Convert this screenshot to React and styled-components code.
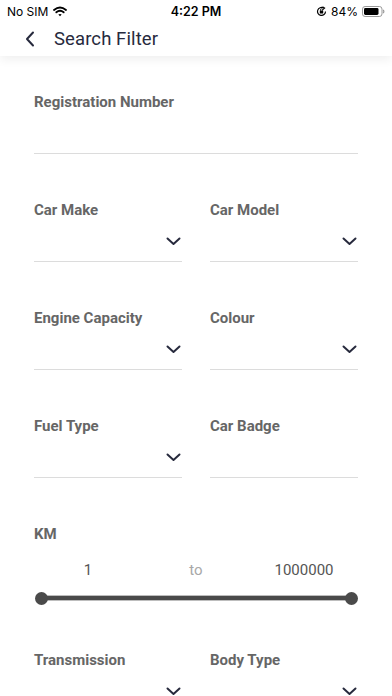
import styled, { createGlobalStyle } from "styled-components";

const NAVY = "#272a3d";
const LABEL_GREY = "#666666";
const LINE_GREY = "#dcdcdc";

const GlobalStyle = createGlobalStyle`
  html, body {
    margin: 0;
    padding: 0;
    background: #ffffff;
  }
  body {
    font-family: Roboto, "Liberation Sans", sans-serif;
  }
`;

const Screen = styled.div`
  width: 392px;
  height: 696px;
  overflow: hidden;
  background: #ffffff;
`;

const TopBar = styled.div`
  position: relative;
  z-index: 1;
  background: #ffffff;
  box-shadow: 0 3px 10px rgba(0, 0, 0, 0.07);
`;

const StatusBar = styled.div`
  height: 22px;
  display: grid;
  grid-template-columns: 1fr auto 1fr;
  align-items: center;
  padding: 0 7px;
  font-family: Inter, "Liberation Sans", sans-serif;
  font-size: 12px;
  color: #000;
`;

const StatusLeft = styled.div`
  display: flex;
  align-items: center;
  gap: 5px;
`;

const StatusTime = styled.div`
  font-weight: 600;
  font-size: 12.5px;
`;

const StatusRight = styled.div`
  display: flex;
  align-items: center;
  justify-content: flex-end;
  gap: 4px;
`;

const NavRow = styled.div`
  height: 34px;
  display: flex;
  align-items: center;
  padding-left: 25px;
  gap: 19px;
`;

const Title = styled.div`
  font-size: 18.5px;
  color: ${NAVY};
  letter-spacing: 0.1px;
`;

const Form = styled.div`
  padding: 36px 34px 0;
  display: flex;
  flex-direction: column;
  gap: 46px;
`;

const Row = styled.div`
  display: grid;
  grid-template-columns: 1fr 1fr;
  column-gap: 28px;
`;

const Field = styled.div`
  display: flex;
  flex-direction: column;
`;

const Label = styled.div`
  font-size: 15px;
  line-height: 20px;
  font-weight: 700;
  color: ${LABEL_GREY};
`;

const InputBox = styled.div`
  height: 42px;
  border-bottom: 1px solid ${LINE_GREY};
  display: flex;
  align-items: center;
  justify-content: flex-end;
  padding-right: 1px;
  padding-top: 1px;
  box-sizing: border-box;
`;

const RangeValues = styled.div`
  margin-top: 16px;
  display: grid;
  grid-template-columns: repeat(3, 1fr);
  text-align: center;
  font-size: 15px;
  line-height: 20px;
`;

const RangeValue = styled.span`
  color: ${(p) => (p.$muted ? "#a8a8a8" : "#555555")};
`;

const Slider = styled.div`
  position: relative;
  margin: 12px 7px 0;
  height: 12px;
  display: flex;
  align-items: center;
`;

const Track = styled.div`
  flex: 1;
  height: 4px;
  background: #4a4a4a;
  box-shadow: 0 0 0 1px #bdbdbd;
`;

const Thumb = styled.div`
  position: absolute;
  top: -0.5px;
  width: 13px;
  height: 13px;
  border-radius: 50%;
  background: #4a4a4a;
  ${(p) => (p.$end ? "right: -6.5px;" : "left: -6.5px;")}
`;

const Chevron = () => (
  <svg width="15" height="9" viewBox="0 0 15 9">
    <path d="M1.5 1.5 L7.5 7 L13.5 1.5" fill="none" stroke={NAVY} strokeWidth="2" strokeLinecap="round" strokeLinejoin="round" />
  </svg>
);

const BackIcon = () => (
  <svg width="10" height="16" viewBox="0 0 10 16">
    <path d="M8 1.5 L2 8 L8 14.5" fill="none" stroke={NAVY} strokeWidth="2" strokeLinecap="round" strokeLinejoin="round" />
  </svg>
);

const Wifi = () => (
  <svg width="14" height="11" viewBox="0 0 14 11">
    <path d="M1 4 Q7 -1 13 4" fill="none" stroke="#000" strokeWidth="1.8" strokeLinecap="round" />
    <path d="M3.3 6.3 Q7 3.2 10.7 6.3" fill="none" stroke="#000" strokeWidth="1.8" strokeLinecap="round" />
    <path d="M5.3 8.6 L7 10.3 L8.7 8.6 Q7 7.2 5.3 8.6 Z" fill="#000" />
  </svg>
);

const RotationLock = () => (
  <svg width="11" height="11" viewBox="0 0 11 11">
    <path d="M9.5 5.5 A4 4 0 1 1 7.5 2" fill="none" stroke="#000" strokeWidth="1.2" />
    <path d="M6.5 0.8 L8.6 2 L6.8 3.6" fill="none" stroke="#000" strokeWidth="1.1" />
    <rect x="3.8" y="4.6" width="3.4" height="2.8" rx="0.5" fill="#000" />
    <path d="M4.4 4.8 V3.9 A1.1 1.1 0 0 1 6.6 3.9 V4.8" fill="none" stroke="#000" strokeWidth="0.8" />
  </svg>
);

const Battery = () => (
  <svg width="23" height="11" viewBox="0 0 23 11">
    <rect x="0.5" y="0.5" width="19.5" height="10" rx="2.6" fill="none" stroke="#999" />
    <rect x="2" y="2" width="14.5" height="7" rx="1.4" fill="#000" />
    <path d="M21.2 3.8 Q22.5 5.5 21.2 7.2" fill="none" stroke="#999" strokeWidth="1.2" />
  </svg>
);

const SelectField = ({ label }) => (
  <Field>
    <Label>{label}</Label>
    <InputBox>
      <Chevron />
    </InputBox>
  </Field>
);

const TextField = ({ label }) => (
  <Field>
    <Label>{label}</Label>
    <InputBox />
  </Field>
);

export default function App() {
  return (
    <Screen>
      <GlobalStyle />
      <TopBar>
        <StatusBar>
          <StatusLeft>
            <span>No SIM</span>
            <Wifi />
          </StatusLeft>
          <StatusTime>4:22 PM</StatusTime>
          <StatusRight>
            <RotationLock />
            <span>84%</span>
            <Battery />
          </StatusRight>
        </StatusBar>
        <NavRow>
          <BackIcon />
          <Title>Search Filter</Title>
        </NavRow>
      </TopBar>
      <Form>
        <TextField label="Registration Number" />
        <Row>
          <SelectField label="Car Make" />
          <SelectField label="Car Model" />
        </Row>
        <Row>
          <SelectField label="Engine Capacity" />
          <SelectField label="Colour" />
        </Row>
        <Row>
          <SelectField label="Fuel Type" />
          <TextField label="Car Badge" />
        </Row>
        <Field>
          <Label>KM</Label>
          <RangeValues>
            <RangeValue>1</RangeValue>
            <RangeValue $muted>to</RangeValue>
            <RangeValue>1000000</RangeValue>
          </RangeValues>
          <Slider>
            <Track />
            <Thumb />
            <Thumb $end />
          </Slider>
        </Field>
        <Row>
          <SelectField label="Transmission" />
          <SelectField label="Body Type" />
        </Row>
      </Form>
    </Screen>
  );
}
